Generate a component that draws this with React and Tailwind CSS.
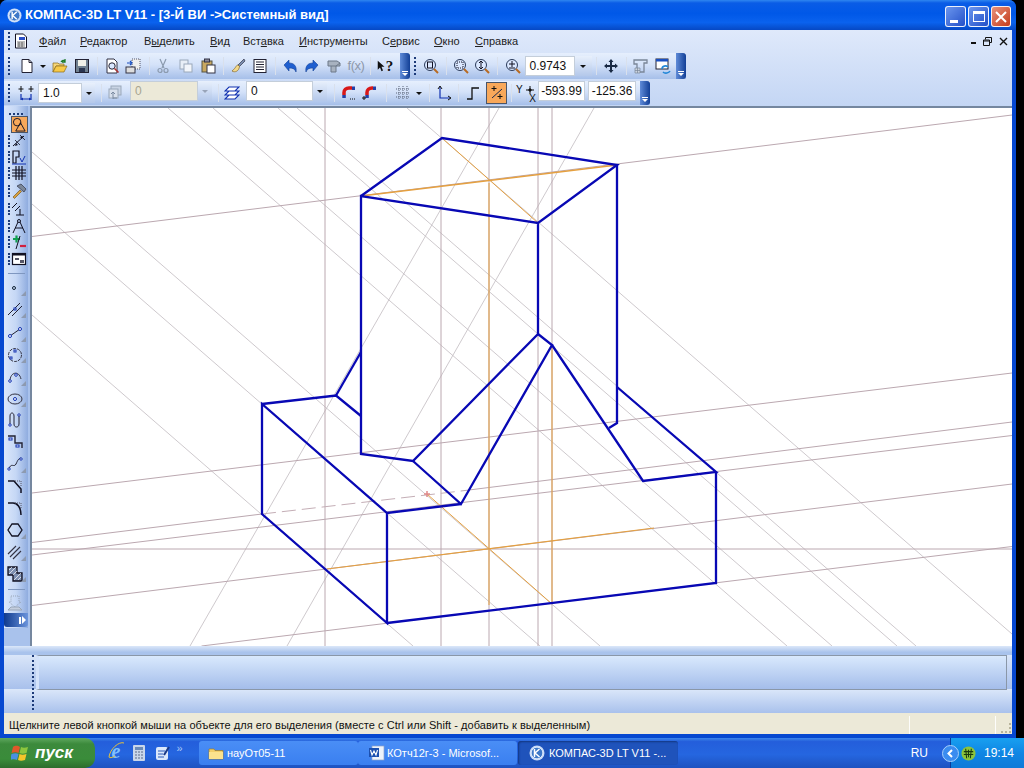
const sans = "font-['Liberation_Sans',sans-serif]"

// one 16x16 drawing per toolbar button
const ic = {
  doc: <><path d="M3 1.5h7l3 3v10H3z" fill="#fff" stroke="#223" /><path d="M10 1.5v3h3" fill="none" stroke="#223" /></>,
  docBlue: <><path d="M2.5 1h8l3 3v11h-11z" fill="#fff" stroke="#112" /><rect x="6" y="4" width="6" height="3" fill="#2a4fc8" /><path d="M4 9h8M4 11h8M4 13h8M6 9v5M9 9v5" stroke="#444" strokeWidth=".7" /></>,
  open: <><path d="M1 5h5l1 1h5v2H4l-3 6z" fill="#f5d67b" stroke="#8a6a1a" strokeWidth=".7" /><path d="M4 8h11l-3 6H1z" fill="#f7c948" stroke="#8a6a1a" strokeWidth=".7" /><path d="M9 4c1-2 3-2 4-1M13 1v3h-3" fill="none" stroke="#1e7a2a" strokeWidth="1.3" /></>,
  save: <><rect x="1.5" y="1.5" width="13" height="13" fill="#6f7f8f" stroke="#223" /><rect x="4" y="2" width="8" height="6" fill="#f0f0e8" /><rect x="5" y="10" width="6" height="4" fill="#2a3550" /></>,
  preview: <><path d="M3 1h7l3 3v11H3z" fill="#fff" stroke="#334" /><circle cx="8" cy="8" r="3.2" fill="#dbe8ff" stroke="#223" /><path d="M10.5 10.5l4 4" stroke="#a33" strokeWidth="1.6" /></>,
  page: <><rect x="7" y="1" width="8" height="10" fill="#eee" stroke="#556" strokeDasharray="1 1" /><rect x="1" y="9" width="9" height="6" fill="#ddd" stroke="#334" /><path d="M2 5h4M5 3l2 2-2 2" fill="none" stroke="#1a4fc0" strokeWidth="1.2" /></>,
  cut: <><path d="M5 1l4 9M11 1L7 10" stroke="#8b9aae" strokeWidth="1.2" /><circle cx="5" cy="12.5" r="2" fill="none" stroke="#8b9aae" strokeWidth="1.2" /><circle cx="11" cy="12.5" r="2" fill="none" stroke="#8b9aae" strokeWidth="1.2" /></>,
  copy: <><rect x="2" y="2" width="8" height="9" fill="#e8eef6" stroke="#9aa8ba" /><rect x="6" y="6" width="8" height="8" fill="#f2f5fa" stroke="#9aa8ba" /></>,
  paste: <><rect x="2" y="3" width="10" height="11" fill="#c9a860" stroke="#554" /><rect x="4.5" y="1" width="5" height="3" fill="#889" stroke="#334" /><rect x="7" y="7" width="8" height="8" fill="#fff" stroke="#334" /></>,
  brush: <><path d="M14 1L8 7l1.5 1.5L15 3z" fill="#7a8db0" stroke="#223" strokeWidth=".6" /><path d="M8 7c-2 0-2 3-6 6 3 2 7 0 7.5-4.5z" fill="#f3d98b" stroke="#86682a" strokeWidth=".7" /></>,
  props: <><rect x="2" y="1.5" width="12" height="13" fill="#fff" stroke="#223" /><path d="M4 4h8M4 6.5h8M4 9h8M4 11.5h8" stroke="#223" /></>,
  undo: <path d="M1 7l5-5v3c5 0 8 3 7 9-1-3-3-4-7-4v3z" fill="#1f5fd0" stroke="#123f96" strokeWidth=".6" />,
  redo: <path d="M15 7l-5-5v3C5 5 2 8 3 14c1-3 3-4 7-4v3z" fill="#1f5fd0" stroke="#123f96" strokeWidth=".6" />,
  model: <><path d="M2 3h9l3 2v3h-4v6H5V8H2z" fill="#a8b2c0" stroke="#6d7888" /><path d="M5 8h5M10 8l4-3" stroke="#6d7888" fill="none" /></>,
  help: <path d="M1 1v12l3-3 2 5 2-1-2-5h4z" fill="#111" />,
  zoomPage: <><circle cx="7" cy="7" r="5.5" fill="#dbe8ff" stroke="#2a3a5a" /><rect x="4.5" y="4" width="5" height="6" fill="none" stroke="#112" /><path d="M11 11l4 4" stroke="#b86a22" strokeWidth="2" /></>,
  zoomArea: <><circle cx="7" cy="7" r="5.5" fill="#dbe8ff" stroke="#2a3a5a" /><rect x="4" y="4" width="6" height="6" fill="none" stroke="#112" strokeDasharray="1 1" /><path d="M11 11l4 4" stroke="#b86a22" strokeWidth="2" /></>,
  zoomV: <><circle cx="7" cy="7" r="5.5" fill="#dbe8ff" stroke="#2a3a5a" /><path d="M7 3v8M5 5l2-2 2 2M5 9l2 2 2-2" fill="none" stroke="#112" /><path d="M11 11l4 4" stroke="#b86a22" strokeWidth="2" /></>,
  zoomPlus: <><circle cx="7" cy="7" r="5.5" fill="#dbe8ff" stroke="#2a3a5a" /><path d="M4 6h6M7 3v6M4 10h6" stroke="#112" /><path d="M11 11l4 4" stroke="#b86a22" strokeWidth="2" /></>,
  move: <path d="M8 1l2.5 3H9v3h3V5.500L15 8l-3 2.5V9H9v3h1.5L8 15l-2.5-3H7V9H4v1.5L1 8l3-2.5V7h3V4H5.5z" fill="#1a2a44" />,
  crane: <><path d="M2 2h13v3h-3v9H5V6H2z" fill="none" stroke="#7a8698" strokeWidth="1.3" /><path d="M3 10h5v5H3zM3 12.5h5M5.5 10v5" stroke="#7a8698" fill="#ccd4e0" strokeWidth=".7" /></>,
  refresh: <><rect x="1" y="1" width="12" height="10" fill="#fff" stroke="#223" /><rect x="1" y="1" width="12" height="2.5" fill="#1a4fc0" /><path d="M7 11c0-3 4-4 6-2M15 13c-1 2-5 3-7 1" fill="none" stroke="#2488d8" strokeWidth="1.6" /></>,
  step: <><path d="M3 1v6M0.5 4h5M13 1v6M10.500 4h5" stroke="#111" /><path d="M3 14h10M3 9v6M13 9v6" stroke="#1030b0" strokeWidth="1.2" /><path d="M3 14l2-1.500v3zM13 14l-2-1.500v3z" fill="#1030b0" /></>,
  layerOff: <><rect x="4" y="1" width="10" height="9" fill="#c9d4e4" stroke="#9aa8ba" /><rect x="2" y="4" width="9" height="9" fill="#d8e0ec" stroke="#9aa8ba" /><path d="M6 7v7M4 9l2-2 2 2M6 13h4" fill="none" stroke="#7a8aa0" /></>,
  layers: <path d="M5 2h10l-4 4H1zM5 6h10l-4 4H1zM5 10h10l-4 4H1z" fill="#fff" stroke="#1030b0" strokeWidth="1.1" />,
  magA: <><path d="M12 3H9c-3 0-5 2-5 4.500V10" fill="none" stroke="#d81818" strokeWidth="3.500" /><path d="M12 1.500h3v3.500h-3zM2.300 10h3.500v3H2.300z" fill="#2340a8" /><path d="M10 14h1M12 14h1M14 14h1" stroke="#111" /></>,
  magB: <><path d="M11 3H10C7 3 5 5 5 7.500V10" fill="none" stroke="#d81818" strokeWidth="3.500" /><path d="M11 1.500h3v3.500h-3zM3.300 10h3.500v3H3.300z" fill="#2340a8" /><path d="M0 13h4M2 11v4" stroke="#111" /></>,
  grid: <path d="M1 4h14M1 8h14M1 12h14M4 1v14M8 1v14M12 1v14" stroke="#5a6478" strokeDasharray="1 1" />,
  axes: <><path d="M4 2v11h10" fill="none" stroke="#1030b0" strokeWidth="1.2" /><path d="M2 4l2-3 2 3M12 11l3 2-3 2" fill="none" stroke="#111" /></>,
  ortho: <path d="M2 14h5V3h7" fill="none" stroke="#111" strokeWidth="1.3" />,
  snap: <><path d="M3 13L13 4" stroke="#1a2a50" /><path d="M5 1v5M2.5 3.5h5M11 9v5M8.500 11.5h5" stroke="#111" /></>,
  yx: <><path d="M5 1v8M1 5h8" stroke="#111" /><path d="M5 3l2 2-2 2-2-2z" fill="#111" /></>,
  // left toolbar
  geom: <><circle cx="5.5" cy="5.5" r="4" fill="none" stroke="#112" /><path d="M9 6l5 9H4z" fill="none" stroke="#112" /></>,
  dim: <><path d="M2 13L13 3" stroke="#112" /><path d="M4 7l5 5M9 2l5 5" stroke="#112" strokeWidth=".8" /><path d="M5 10l-1 3 3-1M11 6l1-3-3 1" fill="#112" /></>,
  sym: <><path d="M2 2h6v6H5v6H2z" fill="none" stroke="#112" strokeWidth="1.2" /><path d="M9 9l2 4 3-6M1 15h14" fill="none" stroke="#1030b0" /></>,
  hash: <path d="M1 5h14M1 11h14M5 1v14M11 1v14M8 1v14M1 8h14" stroke="#112" strokeWidth="1.2" />,
  hammer: <><path d="M2 14l7-7 1.5 1.5-7 7z" fill="#d8a040" stroke="#6a4a10" strokeWidth=".6" /><path d="M6 3l4-2 5 5-2 3z" fill="#7a8698" stroke="#223" strokeWidth=".6" /></>,
  par: <><path d="M1 7l5-5M4 10l5-5" stroke="#112" /><path d="M9 8v6M5 14h8" stroke="#112" strokeWidth="1.1" /></>,
  compass: <><circle cx="8" cy="3" r="1.5" fill="none" stroke="#112" /><path d="M7 4L2 15M9 4l5 11M4 10h8" fill="none" stroke="#112" /></>,
  plus: <><path d="M2 5h7M5.5 1.5v7" stroke="#10a050" strokeWidth="2.2" /><path d="M9 2L5 15" stroke="#112" /><path d="M9 12h6" stroke="#d02040" strokeWidth="2.2" /></>,
  form: <><rect x="1.5" y="2.5" width="13" height="11" fill="#fff" stroke="#112" strokeWidth="1.2" /><rect x="1.5" y="2.5" width="13" height="2" fill="#112" /><rect x="4" y="7" width="4" height="2" fill="#556" /><rect x="9" y="9" width="4" height="3" fill="#556" /></>,
  point: <circle cx="7" cy="8" r="1.5" fill="none" stroke="#123" />,
  lines: <><path d="M1 14L13 2M5 15L15 5" stroke="#223" /><rect x="7" y="7" width="2" height="2" fill="#fff" stroke="#1030b0" /></>,
  seg: <><path d="M3 12L13 5" stroke="#223" /><circle cx="3" cy="12" r="1.5" fill="#fff" stroke="#1030b0" /><circle cx="13" cy="5" r="1.5" fill="#fff" stroke="#1030b0" /></>,
  circle: <><circle cx="8" cy="8" r="6.5" fill="none" stroke="#334" strokeDasharray="3 1" /><rect x="7" y="3" width="2" height="2" fill="#fff" stroke="#1030b0" /><rect x="3" y="10" width="2" height="2" fill="#fff" stroke="#1030b0" /></>,
  arc: <><path d="M3 12C3 3 12 1 14 10" fill="none" stroke="#334" /><circle cx="3" cy="12" r="1.3" fill="#fff" stroke="#1030b0" /><circle cx="9" cy="6" r="1.3" fill="#fff" stroke="#1030b0" /></>,
  ellipse: <><ellipse cx="8" cy="8" rx="7" ry="5" fill="none" stroke="#334" /><circle cx="8" cy="8" r="1.5" fill="#fff" stroke="#1030b0" /></>,
  spline: <><path d="M3 13V4c0-4 4-4 4 0v8c0 4 5 4 5 0V3" fill="none" stroke="#223" /><circle cx="3" cy="13" r="1.2" fill="#fff" stroke="#1030b0" /><circle cx="12" cy="3" r="1.2" fill="#fff" stroke="#1030b0" /></>,
  steps: <><path d="M1 2h7v7h7v5" fill="none" stroke="#223" strokeWidth="1.4" /><rect x="2" y="4" width="3" height="2" fill="#fff" stroke="#1030b0" /><rect x="9" y="11" width="3" height="2" fill="#fff" stroke="#1030b0" /></>,
  wave: <><path d="M2 13c2-7 5-1 7-5s2-5 5-6" fill="none" stroke="#223" /><circle cx="2" cy="13" r="1.2" fill="#fff" stroke="#1030b0" /><circle cx="14" cy="3" r="1.2" fill="#fff" stroke="#1030b0" /></>,
  chamfer: <><path d="M1 3h6l7 8v4" fill="none" stroke="#112" strokeWidth="1.5" /><path d="M8 3h6v6" fill="none" stroke="#556" strokeDasharray="1 1" /></>,
  fillet: <><path d="M1 3h5c4 0 8 4 8 12" fill="none" stroke="#112" strokeWidth="1.5" /><path d="M8 3h6v6" fill="none" stroke="#556" strokeDasharray="1 1" /></>,
  hex: <path d="M5 2h6l4 6-4 6H5L1 8z" fill="none" stroke="#112" strokeWidth="1.3" />,
  hatchLines: <path d="M1 10l8-8M3 13l10-10M6 15l8-8" stroke="#334" strokeWidth="1.1" />,
  hatch: <><path d="M1 1h9v6h5v8H6V9H1z" fill="#7d8fb0" stroke="#112" strokeWidth="1.3" /><path d="M2 4l3-3M2 8l7-7M6 9l4-4M7 14l7-7M11 14l3-3" stroke="#fff" strokeWidth=".7" /></>,
  dimmed: <><path d="M4 1h8v6h2l-6 5-6-5h2z" fill="none" stroke="#99a6b8" strokeDasharray="1 1" /><path d="M1 15l3-3h8l3 3z" fill="#c4cede" stroke="#99a6b8" /></>,
}

const I = ({ n, s = 16 }) => (
  <svg width={s} height={s} viewBox="0 0 16 16" className="shrink-0">
    {ic[n]}
  </svg>
)

// fixed width cell on a toolbar, the icon sits in the middle
const T = ({ w, n, children }) => (
  <div className={`${w} h-full flex items-center justify-center shrink-0`}>
    {n ? <I n={n} /> : children}
  </div>
)

const Sep = ({ w }) => (
  <T w={w}>
    <div className="w-px h-[18px] bg-[#7f97c0] border-r border-white/70" />
  </T>
)

const Grip = ({ w = 'w-[10px]' }) => (
  <T w={w}>
    <div className="h-[18px] w-[2px] border-l-2 border-dotted border-[#1c3a78]" />
  </T>
)

const Arrow = ({ w }) => (
  <T w={w}>
    <div className="w-0 h-0 border-x-[3px] border-x-transparent border-t-[3px] border-t-[#111]" />
  </T>
)

const Chevron = () => (
  <div className="w-[10px] h-full shrink-0 rounded-r-[3px] bg-[linear-gradient(90deg,#5f8bd8,#123f96)] flex flex-col items-center justify-end pb-[3px]">
    <div className="w-[6px] h-px bg-white mb-px" />
    <div className="w-0 h-0 border-x-[3px] border-x-transparent border-t-[3px] border-t-white" />
  </div>
)

const Combo = ({ w, boxW, value, off }) => (
  <div className={`${w} h-[20px] flex shrink-0`}>
    <div className={`${boxW} h-full border border-[#c4ceda] flex items-center pl-[4px] text-[12px] ${off ? 'bg-[#ece9d8] text-[#a8a590]' : 'bg-white text-[#111]'}`}>
      {value}
    </div>
    <div className="flex-1 h-full flex items-center justify-center bg-[linear-gradient(180deg,#e8f0fc,#b4c8ea)]">
      <div className={`w-0 h-0 border-x-[3px] border-x-transparent border-t-[3px] ${off ? 'border-t-[#98a4b8]' : 'border-t-[#111]'}`} />
    </div>
  </div>
)

const Input = ({ w, value }) => (
  <div className={`${w} h-[20px] shrink-0 bg-white border border-[#c4ceda] flex items-center justify-center text-[12px] text-[#111]`}>
    {value}
  </div>
)

const barBg = 'bg-[linear-gradient(180deg,#e6effd_0%,#d4e2f9_45%,#a6bfe9_100%)]'

function Row1() {
  return (
    <div className="h-[28px] flex py-px">
      <div className={`w-[406px] flex ${barBg}`}>
        <Grip />
        <T w="w-[26px]" n="doc" />
        <Arrow w="w-[6px]" />
        <T w="w-[28px]" n="open" />
        <T w="w-[16px]" n="save" />
        <Sep w="w-[14px]" />
        <T w="w-[16px]" n="preview" />
        <T w="w-[26px]" n="page" />
        <Sep w="w-[6px]" />
        <T w="w-[22px]" n="cut" />
        <T w="w-[24px]" n="copy" />
        <T w="w-[20px]" n="paste" />
        <Sep w="w-[10px]" />
        <T w="w-[20px]" n="brush" />
        <T w="w-[24px]" n="props" />
        <Sep w="w-[6px]" />
        <T w="w-[26px]" n="undo" />
        <T w="w-[14px]" n="redo" />
        <T w="w-[32px]" n="model" />
        <T w="w-[12px]">
          <span className="text-[13px] text-[#8d98aa] whitespace-nowrap tracking-[-0.5px]">f(x)</span>
        </T>
        <Sep w="w-[16px]" />
        <T w="w-[14px]">
          <div className="flex items-center">
            <I n="help" s={12} />
            <span className="font-['Liberation_Serif',serif] font-bold text-[15px] leading-none text-[#111] -ml-[3px]">?</span>
          </div>
        </T>
        <div className="flex-1" />
        <Chevron />
      </div>
      <div className={`w-[276px] flex ${barBg}`}>
        <Grip />
        <T w="w-[22px]" n="zoomPage" />
        <Sep w="w-[8px]" />
        <T w="w-[22px]" n="zoomArea" />
        <T w="w-[20px]" n="zoomV" />
        <Sep w="w-[10px]" />
        <T w="w-[22px]" n="zoomPlus" />
        <T w="w-[68px]">
          <Combo w="w-[67px]" boxW="w-[50px]" value="0.9743" />
        </T>
        <Sep w="w-[8px]" />
        <T w="w-[22px]" n="move" />
        <Sep w="w-[8px]" />
        <T w="w-[20px]" n="crane" />
        <T w="w-[26px]" n="refresh" />
        <Chevron />
      </div>
    </div>
  )
}

function Row2() {
  return (
    <div className="h-[26px] flex py-px">
      <div className={`w-[646px] flex ${barBg}`}>
        <Grip />
        <T w="w-[24px]" n="step" />
        <T w="w-[57px]">
          <Combo w="w-[57px]" boxW="w-[44px]" value="1.0" />
        </T>
        <Sep w="w-[12px]" />
        <T w="w-[16px]" n="layerOff" />
        <T w="w-[7px]" />
        <Combo w="w-[82px]" boxW="w-[68px]" value="0" off />
        <Sep w="w-[12px]" />
        <T w="w-[16px]" n="layers" />
        <T w="w-[6px]" />
        <Combo w="w-[81px]" boxW="w-[67px]" value="0" />
        <Sep w="w-[14px]" />
        <T w="w-[14px]" n="magA" />
        <T w="w-[30px]" n="magB" />
        <Sep w="w-[2px]" />
        <T w="w-[6px]" />
        <T w="w-[20px]" n="grid" />
        <Arrow w="w-[12px]" />
        <Sep w="w-[8px]" />
        <T w="w-[22px]" n="axes" />
        <Sep w="w-[6px]" />
        <T w="w-[24px]" n="ortho" />
        <T w="w-[1px]" />
        <T w="w-[21px]">
          <div className="w-[21px] h-[22px] flex items-center justify-center bg-[#f8a85a] border border-[#4a5568]">
            <I n="snap" />
          </div>
        </T>
        <Sep w="w-[8px]" />
        <T w="w-[20px]">
          <div className="w-[18px] h-[20px] flex text-[10px] leading-none text-[#111]">
            <span className="mt-[2px]">Y</span>
            <div className="flex flex-col items-center ml-[2px] mt-[2px]">
              <I n="yx" s={16} />
              <span className="-mt-[7px]">X</span>
            </div>
          </div>
        </T>
        <T w="w-[3px]" />
        <Input w="w-[47px]" value="-593.99" />
        <T w="w-[3px]" />
        <Input w="w-[48px]" value="-125.36" />
        <T w="w-[4px]" />
        <Chevron />
      </div>
    </div>
  )
}

const leftA = [
  ['h-[16px]', 'dim'], ['h-[16px]', 'sym'], ['h-[16px]', 'hash'], ['h-[19px]', 'hammer'],
  ['h-[18px]', 'par'], ['h-[16px]', 'compass'], ['h-[16px]', 'plus'], ['h-[18px]', 'form'],
]
const leftB = [
  ['h-[20px]', 'point', true], ['h-[22px]', 'lines', true], ['h-[24px]', 'seg', true], ['h-[21px]', 'circle', true],
  ['h-[23px]', 'arc', true], ['h-[21px]', 'ellipse', true], ['h-[22px]', 'spline'], ['h-[21px]', 'steps'],
  ['h-[23px]', 'wave', true], ['h-[22px]', 'chamfer'], ['h-[22px]', 'fillet'], ['h-[22px]', 'hex', true],
  ['h-[22px]', 'hatchLines', true], ['h-[21px]', 'hatch', true],
]

// upper group: a dotted grip in front of every button
const LeftGripBtn = ({ h, n }) => (
  <div className={`${h} flex items-center shrink-0 pl-[4px]`}>
    <div className="w-[2px] h-[12px] border-l-2 border-dotted border-[#1c3a78]" />
    <div className="w-px" />
    <I n={n} />
  </div>
)

const LeftBtn = ({ h, n, more }) => (
  <div className={`${h} relative flex items-center pl-[3px] shrink-0`}>
    <I n={n} />
    {more && <div className="absolute right-[2px] bottom-[2px] w-0 h-0 border-l-[5px] border-l-transparent border-b-[5px] border-b-[#8d9ab0]" />}
  </div>
)

const LeftSep = () => (
  <div className="h-[10px] flex items-center justify-center shrink-0">
    <div className="w-[17px] h-px bg-[#7f97c0]" />
  </div>
)

function LeftBar() {
  return (
    <div className="w-[26px] shrink-0 bg-[#a9c2ec] flex flex-col">
      <div className="w-[24px] h-[522px] flex flex-col bg-[linear-gradient(90deg,#dbe7fb,#c5d7f5_50%,#8facdf)]">
        <div className="h-[10px] flex justify-center items-center shrink-0">
          <div className="w-[14px] border-t-2 border-dotted border-[#1c3a78] mt-[6px]" />
        </div>
        <div className="h-[17px] flex items-center justify-end shrink-0">
          <div className="w-[17px] h-[17px] bg-[#f8a85a] border border-[#4a5568] flex items-center justify-center">
            <I n="geom" s={15} />
          </div>
        </div>
        {leftA.map(([h, n]) => <LeftGripBtn key={n} h={h} n={n} />)}
        <LeftSep />
        {leftB.map(([h, n, more]) => <LeftBtn key={n} h={h} n={n} more={more} />)}
        <LeftSep />
        <LeftBtn h="h-[18px]" n="dimmed" />
        <div className="h-[14px] mt-px shrink-0 rounded-b-[3px] bg-[linear-gradient(90deg,#0f3a8e,#6b94dc)] flex items-center justify-end gap-px pr-[2px]">
          <div className="w-[2px] h-[7px] bg-white" />
          <div className="w-0 h-0 border-y-[4px] border-y-transparent border-l-[4px] border-l-white" />
        </div>
      </div>
    </div>
  )
}

// thin construction lines, x1 y1 x2 y2 in page coordinates
const thin = [
  [32, 315, 413, 646], [32, 204, 540, 646], [32, 152, 600, 646], [168, 108, 787, 646],
  [213, 108, 832, 646], [278, 108, 897, 646], [297, 108, 916, 646], [407, 108, 1012, 634],
  [499, 108, 190, 646], [594, 108, 287, 646],
]
const rose = [
  [325, 108, 325, 646], [441, 108, 441, 646], [489, 108, 489, 646], [538, 108, 538, 646], [552, 108, 552, 646],
  [32, 549, 1012, 549],
  [32, 236.5, 1012, 115], [32, 493, 1012, 373], [32, 542.5, 262, 514], [461, 491, 1012, 422],
  [32, 555, 1012, 435.5], [32, 605.5, 1012, 484], [201.5, 646, 1012, 546.5],
]
const orange = [
  [442, 138, 538, 223, 1], [361, 196, 617, 165, 1.4], [489, 183, 489, 605, 1], [552, 346, 552, 604, 1],
  [327, 569, 654, 528, 1.2], [427, 494, 552, 604, 1],
]
const blue = [
  [[361, 196], [442, 138], [617, 165], [538, 223], [361, 196], [361, 454], [413, 461], [538, 334], [538, 223]],
  [[617, 165], [617, 423], [609, 428]],
  [[538, 334], [552, 345], [461, 504], [413, 461]],
  [[552, 345], [643, 481], [716, 472], [617, 387]],
  [[461, 504], [387, 513], [262, 404], [262, 514], [387, 623], [387, 513]],
  [[262, 404], [336, 395.5], [361, 416]],
  [[336, 395.5], [361, 352]],
  [[387, 623], [716, 583], [716, 472]],
]

function Drawing() {
  return (
    <svg width="980" height="538" viewBox="32 108 980 538" className="block">
      {thin.map(([a, b, c, d]) => <line key={`${a}-${b}`} x1={a} y1={b} x2={c} y2={d} stroke="#c2bbc0" strokeWidth=".8" />)}
      {rose.map(([a, b, c, d]) => <line key={`${a}-${b}-${c}`} x1={a} y1={b} x2={c} y2={d} stroke="#bba8b0" strokeWidth="1" />)}
      <line x1="262" y1="514" x2="461" y2="491" stroke="#c4aeb6" strokeWidth="1" strokeDasharray="14 6" />
      {orange.map(([a, b, c, d, sw]) => <line key={`${a}-${b}`} x1={a} y1={b} x2={c} y2={d} stroke="#e5a040" strokeWidth={sw} />)}
      <path d="M424 494h6M427 491v6" stroke="#e08a8a" strokeWidth="1.5" />
      {blue.map((pts, i) => (
        <polyline key={i} points={pts.map((p) => p.join(',')).join(' ')} fill="none" stroke="#0808b4" strokeWidth="2.3" strokeLinejoin="miter" />
      ))}
    </svg>
  )
}

const Kompas = ({ s = 14 }) => (
  <svg width={s} height={s} viewBox="0 0 16 16" className="shrink-0">
    <circle cx="8" cy="8" r="7.5" fill="#c9dcf8" />
    <circle cx="8" cy="8" r="5.8" fill="#3d78c8" stroke="#eaf2ff" strokeWidth=".8" />
    <path d="M5.5 4v8M10.5 4L6 8l4.5 4" fill="none" stroke="#fff" strokeWidth="1.5" />
  </svg>
)

const WinBtn = ({ w, red, children }) => (
  <div className={`${w} h-[21px] rounded-[3px] border border-white/90 flex items-center justify-center ${red ? 'bg-[linear-gradient(135deg,#e8917a,#c43c1c)]' : 'bg-[linear-gradient(135deg,#6b96ee,#2350c8)]'}`}>
    {children}
  </div>
)

const Menu = ({ w, a = '', u, b = '' }) => (
  <div className={`${w} shrink-0 whitespace-nowrap`}>
    {a}<span className="underline">{u}</span>{b}
  </div>
)

function TitleBar() {
  return (
    <div className="h-[30px] shrink-0 rounded-t-[7px] flex items-center pl-[7px] pr-[5px] bg-[linear-gradient(180deg,#2f86f0_0%,#0a5ce6_10%,#0058e8_45%,#0a62ee_75%,#0648c4_100%)]">
      <Kompas s={15} />
      <span className="ml-[3px] text-[13px] font-bold text-white whitespace-nowrap">
        КОМПАС-3D LT V11 - [3-Й ВИ -&gt;Системный вид]
      </span>
      <div className="ml-auto flex gap-[2px] mt-[3px]">
        <WinBtn w="w-[21px]"><div className="w-[8px] h-[3px] bg-white mt-[9px] -ml-[3px]" /></WinBtn>
        <WinBtn w="w-[21px]"><div className="w-[12px] h-[11px] border border-t-[3px] border-white" /></WinBtn>
        <WinBtn w="w-[20px]" red>
          <svg width="12" height="12" viewBox="0 0 12 12"><path d="M1 1l10 10M11 1L1 11" stroke="#fff" strokeWidth="2" /></svg>
        </WinBtn>
      </div>
    </div>
  )
}

function MenuBar() {
  return (
    <div className="h-[22px] flex items-center text-[11px] text-[#222]">
      <Grip />
      <T w="w-[14px]" n="docBlue" />
      <div className="w-[11px]" />
      <Menu w="w-[41px]" u="Ф" b="айл" />
      <Menu w="w-[64px]" u="Р" b="едактор" />
      <Menu w="w-[66px]" a="В" u="ы" b="делить" />
      <Menu w="w-[33px]" u="В" b="ид" />
      <Menu w="w-[56px]" a="Вст" u="а" b="вка" />
      <Menu w="w-[83px]" u="И" b="нструменты" />
      <Menu w="w-[52px]" a="С" u="е" b="рвис" />
      <Menu w="w-[41px]" u="О" b="кно" />
      <Menu w="w-[60px]" u="С" b="правка" />
      <div className="ml-auto flex items-center gap-[7px] pr-[4px]">
        <div className="w-[5px] h-[2px] bg-[#111] mt-[3px]" />
        <svg width="9" height="9" viewBox="0 0 9 9"><path d="M2.5 2.5v-2h6v5h-2M.5 3h6v5.5h-6zM.5 4h6" fill="none" stroke="#111" /></svg>
        <svg width="9" height="9" viewBox="0 0 9 9"><path d="M1 1l7 7M8 1L1 8" stroke="#111" strokeWidth="1.4" /></svg>
      </div>
    </div>
  )
}

function BottomPanel() {
  return (
    <div className="h-[70px] shrink-0 flex flex-col">
      <div className="h-[9px] shrink-0 bg-[linear-gradient(180deg,#dbe7f9_0%,#a9c3ec_70%)]" />
      <div className="h-[58px] flex bg-[linear-gradient(180deg,#dae6f9_0%,#a9c1ec_58%,#dce8fa_58%,#a9c1ec_100%)]">
        <div className="w-[28px] shrink-0" />
        <div className="w-[4px] shrink-0 pb-[3px]">
          <div className="h-full w-[2px] border-l-2 border-dotted border-[#1c3a78]" />
        </div>
        <div className="w-[971px] h-[35px] shrink-0 border-y border-r border-[#8a97a8] border-l-[3px] border-l-[#d3e2fa] bg-[linear-gradient(180deg,#d9e9fd,#a4bdea)]" />
      </div>
      <div className="h-[3px] shrink-0 bg-[#ece9d8]" />
    </div>
  )
}

function StatusBar() {
  return (
    <div className="h-[18px] shrink-0 bg-[#ece9d8] flex items-center text-[11px] text-[#111]">
      <div className="w-[905px] pl-[5px] whitespace-nowrap tracking-[0.04px]">
        Щелкните левой кнопкой мыши на объекте для его выделения (вместе с Ctrl или Shift - добавить к выделенным)
      </div>
      <div className="w-[86px] h-full border-l border-white/90" />
      <div className="flex-1 h-full border-l border-white/90 flex items-end justify-end pb-px pr-px">
        <div className="w-[10px] h-[10px] border-r-2 border-b-2 border-dotted border-[#b8b49c]" />
      </div>
    </div>
  )
}

const Flag = () => (
  <svg width="20" height="18" viewBox="0 0 20 18" className="shrink-0">
    <path d="M2 3c3-2 5-1 7 0l-1.5 6c-2-1-4-1-7 0z" fill="#e0582a" />
    <path d="M10 3c2 1 4 1 7 0l-1.5 6c-3 1-5 1-7 0z" fill="#8cc63e" />
    <path d="M0.5 10c3-1 5-1 7 0L6 16c-2-1-4-1-7 0z" fill="#4a90e0" />
    <path d="M8.500 10c2 1 4 1 7 0L14 16c-3 1-5 1-7 0z" fill="#f5c52a" />
  </svg>
)

const Folder = () => (
  <svg width="16" height="16" viewBox="0 0 16 16" className="shrink-0">
    <path d="M1 4h5l1 1.5h8V14H1z" fill="#f3cf6a" stroke="#9a7a2a" strokeWidth=".7" />
    <path d="M1 7h14v7H1z" fill="#fbe28e" />
  </svg>
)

const WordIcon = () => (
  <svg width="16" height="16" viewBox="0 0 16 16" className="shrink-0">
    <rect x="3" y="1" width="12" height="14" fill="#eef3fb" stroke="#8aa0c8" strokeWidth=".7" />
    <rect x="0" y="3" width="10" height="9" fill="#1c50b0" />
    <path d="M1.5 5l1.5 5 2-4 2 4 1.5-5" fill="none" stroke="#fff" strokeWidth="1.1" />
  </svg>
)

const TaskBtn = ({ w, pad, gap, active, icon, children }) => (
  <div className={`${w} ${pad} ${gap} h-[24px] shrink-0 rounded-[3px] flex items-center text-[11px] whitespace-nowrap ${active ? 'bg-[#1f53bb] shadow-[inset_1px_1px_2px_#123580]' : 'bg-[linear-gradient(180deg,#4a8ef6,#3a7ff0)]'} text-white`}>
    {icon}
    <span>{children}</span>
  </div>
)

function Taskbar() {
  return (
    <div className="h-[30px] shrink-0 flex items-center text-white bg-[linear-gradient(180deg,#3d86ea_0%,#245edb_12%,#2566e0_55%,#1e52c0_100%)]">
      <div className="w-[95px] h-full shrink-0 rounded-r-[10px] flex items-center pl-[11px] gap-[4px] bg-[linear-gradient(180deg,#5fa85f_0%,#3c8a3c_20%,#3a8c3a_70%,#2c6c2c_100%)]">
        <Flag />
        <span className="italic font-bold text-[17px] leading-none -mt-[1px]">пуск</span>
      </div>
      <div className="w-[12px] shrink-0" />
      <div className="w-[18px] shrink-0 flex justify-center">
        <div className="relative">
          <span className="font-['Liberation_Serif',serif] italic font-bold text-[20px] leading-none text-[#7fc0ff]">e</span>
          <svg width="20" height="20" viewBox="0 0 20 20" className="absolute -left-[5px] -top-[1px]"><path d="M17 3C12 1 3 9 2 17c0 1 3 1 6-1" fill="none" stroke="#e8c23a" strokeWidth="1" /></svg>
        </div>
      </div>
      <div className="w-[5px] shrink-0" />
      <div className="w-[18px] shrink-0 flex justify-center">
        <svg width="12" height="16" viewBox="0 0 12 16"><rect width="12" height="16" rx="1" fill="#c9d6ea" /><rect x="2" y="2" width="8" height="3" fill="#6a8ab8" /><path d="M2 7h2M5 7h2M8 7h2M2 10h2M5 10h2M8 10h2M2 13h2M5 13h2M8 13h2" stroke="#5a6a88" strokeWidth="1.2" /></svg>
      </div>
      <div className="w-[5px] shrink-0" />
      <div className="w-[18px] shrink-0 flex justify-center">
        <svg width="15" height="16" viewBox="0 0 15 16"><rect x="1" y="2" width="12" height="13" rx="2" fill="#dbe8fb" /><path d="M3 6h7M3 9h5M3 12h6" stroke="#2a5ab8" /><path d="M9 10l5-8" stroke="#1a3a88" strokeWidth="2" /></svg>
      </div>
      <div className="w-[17px] shrink-0 text-[11px] text-[#a8c8f8] text-center -mt-[9px]">»</div>
      <div className="w-[11px] shrink-0" />
      <TaskBtn w="w-[159px]" pad="pl-[9px]" gap="gap-[3px]" icon={<Folder />}>науОт05-11</TaskBtn>
      <TaskBtn w="w-[159px]" pad="pl-[11px]" gap="gap-[2px]" icon={<WordIcon />}>КОтч12г-3 - Microsof...</TaskBtn>
      <div className="w-px shrink-0" />
      <TaskBtn w="w-[160px]" pad="pl-[11px]" gap="gap-[4px]" active icon={<Kompas s={16} />}>КОМПАС-3D LT V11 -...</TaskBtn>
      <div className="flex-1 flex justify-end items-center pr-[22px]">
        <span className="text-[12px]">RU</span>
      </div>
      <div className="w-[74px] h-full shrink-0 flex items-center border-l border-[#0a3a9a] bg-[linear-gradient(180deg,#18a0f0,#0f86e4_50%,#0f7ad8)]">
        <div className="w-[17px] h-[17px] -ml-[9px] shrink-0 rounded-full bg-[#3a8cf0] border border-[#a8d0fa] flex items-center justify-center">
          <svg width="9" height="9" viewBox="0 0 9 9"><path d="M6 1L2.5 4.5 6 8" fill="none" stroke="#fff" strokeWidth="2" /></svg>
        </div>
        <svg width="15" height="15" viewBox="0 0 16 16" className="ml-[2px] shrink-0"><circle cx="8" cy="8" r="7.500" fill="#8cc43c" /><path d="M3 6h10M3 9h10M5 3l1 10M11 3l-1 10M8 4v8" stroke="#1a3a10" strokeWidth="1.1" /></svg>
        <span className="ml-[8px] text-[12px]">19:14</span>
      </div>
    </div>
  )
}

export default function App() {
  return (
    <div className={`w-[1024px] h-[768px] overflow-hidden flex flex-col bg-black ${sans}`}>
      <div className="w-[1016px] h-[738px] shrink-0 flex flex-col bg-[#0648d0] rounded-t-[7px]">
        <TitleBar />
        <div className="flex-1 mx-[4px] mb-[4px] flex flex-col min-h-0">
          <div className="h-[76px] shrink-0 bg-[linear-gradient(180deg,#dfe9fb_0%,#c4d6f4_100%)]">
            <MenuBar />
            <Row1 />
            <Row2 />
          </div>
          <div className="h-[540px] shrink-0 flex">
            <LeftBar />
            <div className="w-[982px] h-[540px] bg-white border-l-2 border-t-2 border-[#75879f]">
              <Drawing />
            </div>
          </div>
          <BottomPanel />
          <StatusBar />
        </div>
      </div>
      <Taskbar />
    </div>
  )
}
